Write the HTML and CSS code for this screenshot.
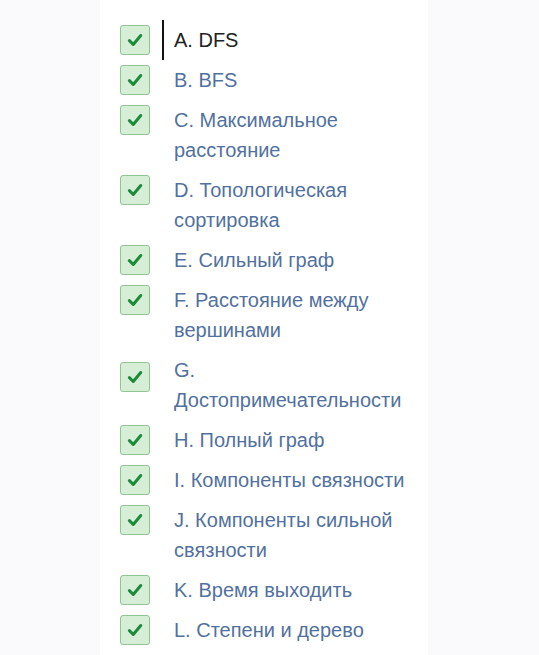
FILE: index.html
```html
<!DOCTYPE html>
<html lang="ru">
<head>
    <meta charset="UTF-8">
    <meta name="viewport" content="width=device-width, initial-scale=1.0">
    <title>Задачи</title>
    <link rel="stylesheet" href="styles.css">
</head>
<body>
    <div class="panel">
        <!-- Problem list, every task solved -->
        <ul class="problem-list">
            <li class="problem">
                <span class="check"><svg viewBox="0 0 16 16"><path d="M3.5 8.5 L6.6 11.6 L12.6 4.4"/></svg></span>
                <a class="problem-link active" href="#">A. DFS</a>
            </li>
            <li class="problem">
                <span class="check"><svg viewBox="0 0 16 16"><path d="M3.5 8.5 L6.6 11.6 L12.6 4.4"/></svg></span>
                <a class="problem-link" href="#">B. BFS</a>
            </li>
            <li class="problem">
                <span class="check"><svg viewBox="0 0 16 16"><path d="M3.5 8.5 L6.6 11.6 L12.6 4.4"/></svg></span>
                <a class="problem-link" href="#">C. Максимальное расстояние</a>
            </li>
            <li class="problem">
                <span class="check"><svg viewBox="0 0 16 16"><path d="M3.5 8.5 L6.6 11.6 L12.6 4.4"/></svg></span>
                <a class="problem-link" href="#">D. Топологическая сортировка</a>
            </li>
            <li class="problem">
                <span class="check"><svg viewBox="0 0 16 16"><path d="M3.5 8.5 L6.6 11.6 L12.6 4.4"/></svg></span>
                <a class="problem-link" href="#">E. Сильный граф</a>
            </li>
            <li class="problem">
                <span class="check"><svg viewBox="0 0 16 16"><path d="M3.5 8.5 L6.6 11.6 L12.6 4.4"/></svg></span>
                <a class="problem-link" href="#">F. Расстояние между вершинами</a>
            </li>
            <li class="problem problem-shifted">
                <span class="check"><svg viewBox="0 0 16 16"><path d="M3.5 8.5 L6.6 11.6 L12.6 4.4"/></svg></span>
                <a class="problem-link" href="#">G. Достопримечательности</a>
            </li>
            <li class="problem">
                <span class="check"><svg viewBox="0 0 16 16"><path d="M3.5 8.5 L6.6 11.6 L12.6 4.4"/></svg></span>
                <a class="problem-link" href="#">H. Полный граф</a>
            </li>
            <li class="problem">
                <span class="check"><svg viewBox="0 0 16 16"><path d="M3.5 8.5 L6.6 11.6 L12.6 4.4"/></svg></span>
                <a class="problem-link" href="#">I. Компоненты связности</a>
            </li>
            <li class="problem">
                <span class="check"><svg viewBox="0 0 16 16"><path d="M3.5 8.5 L6.6 11.6 L12.6 4.4"/></svg></span>
                <a class="problem-link" href="#">J. Компоненты сильной связности</a>
            </li>
            <li class="problem">
                <span class="check"><svg viewBox="0 0 16 16"><path d="M3.5 8.5 L6.6 11.6 L12.6 4.4"/></svg></span>
                <a class="problem-link" href="#">K. Время выходить</a>
            </li>
            <li class="problem">
                <span class="check"><svg viewBox="0 0 16 16"><path d="M3.5 8.5 L6.6 11.6 L12.6 4.4"/></svg></span>
                <a class="problem-link" href="#">L. Степени и дерево</a>
            </li>
        </ul>
    </div>
</body>
</html>
```

FILE: styles.css
```css
body {
    font-family: 'Liberation Sans', Arial, sans-serif;
    background-color: #fafafc;
    margin: 0;
    padding: 0;
}
.panel {
    width: 328px;
    min-height: 655px;
    margin-left: 100px;
    background-color: #FFFFFF;
    box-sizing: border-box;
    padding: 20px 0 0 20px;
}
.problem-list {
    list-style: none;
    margin: 0;
    padding: 0;
}
.problem {
    display: flex;
    align-items: flex-start;
}
.check {
    flex: none;
    width: 28px;
    height: 28px;
    margin-top: 5px;
    margin-right: 12px;
    border: 1px solid #93c493;
    border-radius: 3px;
    background-color: #d6edd6;
    display: flex;
    align-items: center;
    justify-content: center;
}
.problem-shifted .check {
    margin-top: 12px;
}
.check svg {
    width: 20px;
    height: 20px;
    fill: none;
    stroke: #1d8a3a;
    stroke-width: 2.4;
    stroke-linecap: round;
    stroke-linejoin: round;
}
.problem-link {
    display: block;
    padding: 5px 0 5px 10px;
    border-left: 2px solid transparent;
    font-size: 20px;
    line-height: 30px;
    color: #52719f;
    text-decoration: none;
}
.problem-link.active {
    border-left-color: #111;
    color: #222;
}
```
